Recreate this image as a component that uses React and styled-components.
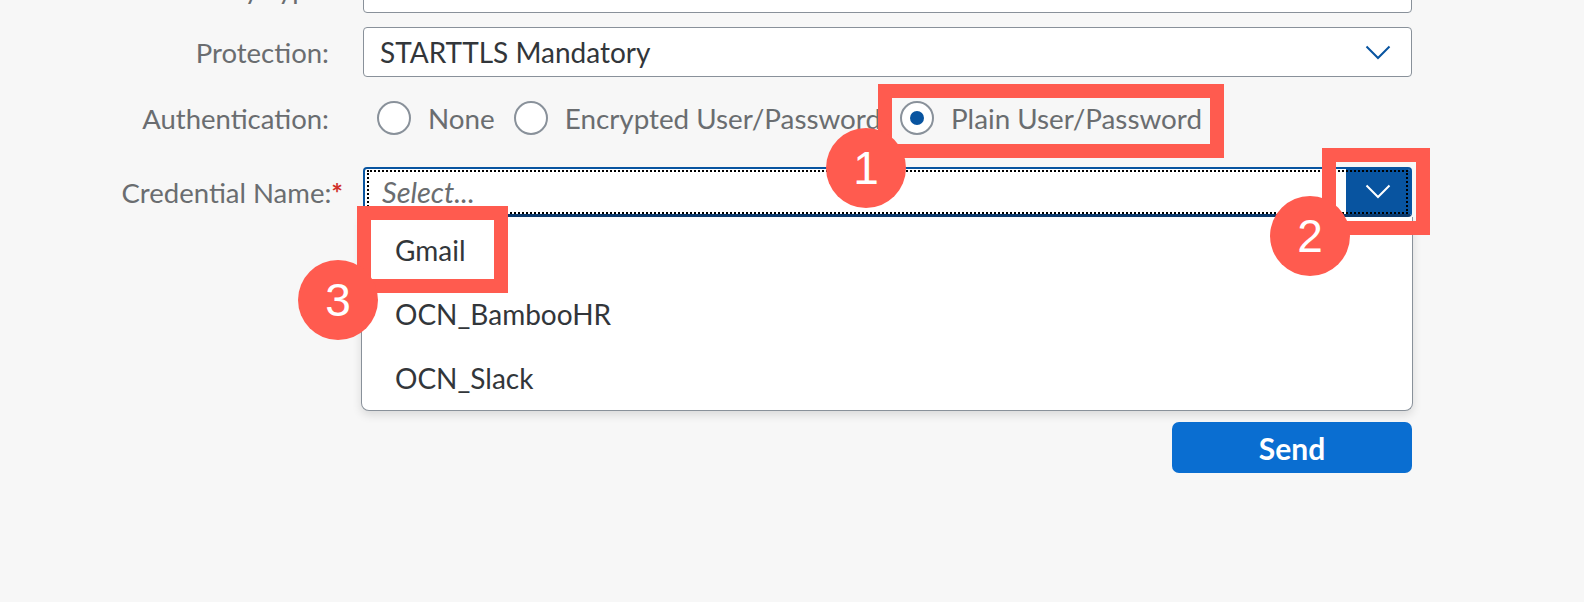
import React from 'react';
import styled, { createGlobalStyle } from 'styled-components';

const GlobalStyle = createGlobalStyle`
  html, body {
    margin: 0;
    padding: 0;
    background: #f7f7f7;
    overflow: hidden;
  }
  body {
    font-family: Lato, "Open Sans", sans-serif;
  }
`;

const Page = styled.div`
  position: relative;
  width: 1584px;
  height: 602px;
  overflow: hidden;
  background: #f7f7f7;
`;

const Form = styled.div`
  display: flex;
  flex-direction: column;
  gap: 14px;
  margin-top: -37px;
`;

const Row = styled.div`
  display: flex;
  align-items: center;
  column-gap: 20px;
  margin-top: ${(p) => p.$mt || 0}px;
`;

const Label = styled.label`
  width: 343px;
  flex-shrink: 0;
  box-sizing: border-box;
  padding-right: ${(p) => (p.$required ? 0 : 14)}px;
  text-align: right;
  font-size: 27.5px;
  color: #6a6d70;
  white-space: nowrap;
`;

const Star = styled.span`
  color: #d0302a;
  font-weight: 700;
`;

const Control = styled.div`
  position: relative;
  width: 1049px;
  flex-shrink: 0;
`;

const Field = styled.div`
  box-sizing: border-box;
  height: 50px;
  display: flex;
  align-items: center;
  justify-content: space-between;
  padding: 0 20px 0 16px;
  background: #fff;
  border: 1px solid #89919a;
  border-radius: 4px;
  font-size: 28px;
  color: #32363a;
`;

const FocusField = styled.div`
  position: relative;
  box-sizing: border-box;
  height: 50px;
  display: flex;
  align-items: stretch;
  background: #fff;
  border: 2px solid #0854a0;
  border-bottom: 3px solid #0b3a6e;
  border-radius: 4px;

  &::after {
    content: '';
    position: absolute;
    inset: 1px 2px 0 2px;
    border: 2px dotted #000;
    pointer-events: none;
  }
`;

const Placeholder = styled.span`
  flex: 1;
  display: flex;
  align-items: center;
  padding-left: 17px;
  font-size: 29px;
  font-style: italic;
  color: #6a6d70;
`;

const ArrowButton = styled.div`
  width: 64px;
  display: flex;
  align-items: center;
  justify-content: center;
  background: #0854a0;
  border-top-right-radius: 2px;
`;

const RadioGroup = styled.div`
  height: 54px;
  display: flex;
  align-items: center;
  gap: 19px;
  padding-left: 14px;
`;

const RadioItem = styled.div`
  display: flex;
  align-items: center;
  gap: 17px;
  font-size: 27.8px;
  color: #6a6d70;
`;

const RadioCircle = styled.span`
  box-sizing: border-box;
  width: 34px;
  height: 34px;
  border: 2px solid #89919a;
  border-radius: 50%;
  background: #fff;
  display: flex;
  align-items: center;
  justify-content: center;
`;

const RadioDot = styled.span`
  width: 14px;
  height: 14px;
  border-radius: 50%;
  background: #0854a0;
`;

const Popover = styled.div`
  position: absolute;
  top: 100%;
  left: -2px;
  width: 1052px;
  box-sizing: border-box;
  padding-top: 1px;
  background: #fff;
  border: 1px solid #89919a;
  border-top: none;
  border-radius: 0 0 8px 8px;
  box-shadow: 0 4px 10px rgba(0, 0, 0, 0.12);
  z-index: 2;
`;

const Option = styled.div`
  height: 64px;
  display: flex;
  align-items: center;
  padding-left: 33px;
  font-size: 28px;
  color: #32363a;
`;

const SendButton = styled.button`
  display: block;
  margin-left: auto;
  width: 240px;
  height: 51px;
  border: none;
  border-radius: 7px;
  background: #0a6ed1;
  color: #fff;
  font-family: Lato, sans-serif;
  font-size: 30px;
  font-weight: 700;
`;

const Mark = styled.div`
  position: absolute;
  box-sizing: border-box;
  border: 14px solid #ff5b4f;
  z-index: 5;
`;

const Badge = styled.div`
  position: absolute;
  width: 80px;
  height: 80px;
  border-radius: 50%;
  background: #ff5b4f;
  color: #fff;
  display: flex;
  align-items: center;
  justify-content: center;
  font-family: "Liberation Sans", Arial, sans-serif;
  font-size: 46px;
  z-index: 6;
`;

const Chevron = ({ color }) => (
  <svg width="26" height="15" viewBox="0 0 26 15">
    <polyline points="1.5,1.5 13,13 24.5,1.5" fill="none" stroke={color} strokeWidth="2" />
  </svg>
);

const marks = [
  { left: 878, top: 84, width: 346, height: 74 },
  { left: 1322, top: 148, width: 108, height: 87 },
  { left: 357, top: 206, width: 151, height: 87 },
];

const badges = [
  { n: 1, left: 826, top: 128 },
  { n: 2, left: 1270, top: 196 },
  { n: 3, left: 298, top: 260 },
];

export default function App() {
  return (
    <Page>
      <GlobalStyle />
      <Form>
        <Row>
          <Label>Security Type:</Label>
          <Control>
            <Field />
          </Control>
        </Row>
        <Row>
          <Label>Protection:</Label>
          <Control>
            <Field>
              <span>STARTTLS Mandatory</span>
              <Chevron color="#0854a0" />
            </Field>
          </Control>
        </Row>
        <Row>
          <Label>Authentication:</Label>
          <RadioGroup>
            <RadioItem>
              <RadioCircle />
              None
            </RadioItem>
            <RadioItem>
              <RadioCircle />
              Encrypted User/Password
            </RadioItem>
            <RadioItem>
              <RadioCircle>
                <RadioDot />
              </RadioCircle>
              Plain User/Password
            </RadioItem>
          </RadioGroup>
        </Row>
        <Row $mt={8}>
          <Label $required>
            Credential Name:<Star>*</Star>
          </Label>
          <Control>
            <FocusField>
              <Placeholder>Select...</Placeholder>
              <ArrowButton>
                <Chevron color="#ffffff" />
              </ArrowButton>
            </FocusField>
            <Popover>
              <Option>Gmail</Option>
              <Option>OCN_BambooHR</Option>
              <Option>OCN_Slack</Option>
            </Popover>
          </Control>
        </Row>
        <Row $mt={191}>
          <Label />
          <Control>
            <SendButton>Send</SendButton>
          </Control>
        </Row>
      </Form>
      {marks.map((m, i) => (
        <Mark key={i} style={{ left: m.left, top: m.top, width: m.width, height: m.height }} />
      ))}
      {badges.map((b) => (
        <Badge key={b.n} style={{ left: b.left, top: b.top }}>
          {b.n}
        </Badge>
      ))}
    </Page>
  );
}
